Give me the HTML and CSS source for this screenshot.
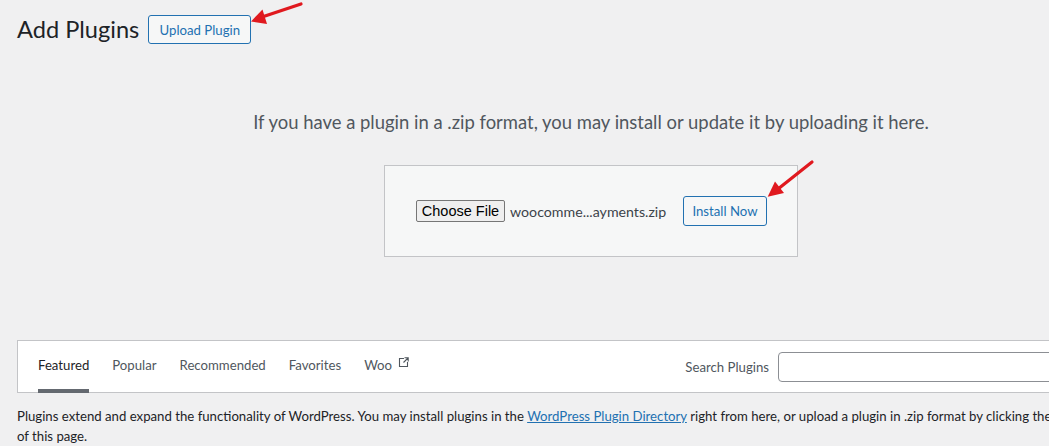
FILE: index.html
```html
<!DOCTYPE html>
<html lang="en">
<head>
<meta charset="utf-8">
<title>Add Plugins</title>
<link rel="stylesheet" href="styles.css">
</head>
<body>
<div class="wrap">
  <div class="page-head">
    <h1 class="page-title">Add Plugins</h1>
    <button class="btn-outline upload-btn" type="button">Upload Plugin</button>
  </div>

  <div class="upload-plugin">
    <p class="install-help">If you have a plugin in a .zip format, you may install or update it by uploading it here.</p>
    <form class="upload-form">
      <button class="file-btn" type="button">Choose File</button>
      <span class="file-name">woocomme...ayments.zip</span>
      <button class="btn-outline install-btn" type="button">Install Now</button>
    </form>
  </div>

  <div class="wp-filter">
    <ul class="filter-links">
      <li><a class="current">Featured</a></li>
      <li><a>Popular</a></li>
      <li><a>Recommended</a></li>
      <li><a>Favorites</a></li>
      <li><a>Woo <svg class="ext" width="11" height="11" viewBox="0 0 11 11"><path d="M6 1.5H1.5V9.5H9.5V5" fill="none" stroke="#50575e" stroke-width="1.1"/><path d="M6.5 0.8H10.2V4.5M10 1L5.5 5.5" fill="none" stroke="#50575e" stroke-width="1.1"/></svg></a></li>
    </ul>
    <div class="search-form">
      <label class="search-label">Search Plugins</label>
      <input class="search-input" type="search">
    </div>
  </div>

  <p class="desc">Plugins extend and expand the functionality of WordPress. You may install plugins in the <a class="link">WordPress Plugin Directory</a> right from here, or upload a plugin in .zip format by clicking the button at the top of this page.</p>
</div>

<svg class="arrows" width="1049" height="446" viewBox="0 0 1049 446">
  <line x1="301" y1="4" x2="262" y2="17" stroke="#e0191f" stroke-width="3.2" stroke-linecap="round"/>
  <polygon points="251,21.5 267,24 262.5,9.5" fill="#e0191f"/>
  <line x1="812" y1="162" x2="778" y2="189" stroke="#e0191f" stroke-width="3.2" stroke-linecap="round"/>
  <polygon points="767.7,196.7 784,193 775,181.5" fill="#e0191f"/>
</svg>
</body>
</html>
```

FILE: styles.css
```css
html, body {
  margin: 0;
  padding: 0;
}
body {
  background: #f0f0f1;
  font-family: Lato, "Liberation Sans", sans-serif;
  color: #3c434a;
  font-size: 13.2px;
  width: 1049px;
  height: 446px;
  overflow: hidden;
  position: relative;
}
.wrap {
  width: 1148px;
  margin-left: 17px;
}
.page-head {
  display: flex;
  align-items: center;
  gap: 9px;
  margin-top: 15px;
  height: 29px;
}
.page-title {
  margin: 0;
  font-size: 23.6px;
  font-weight: 400;
  color: #1d2327;
  line-height: 29px;
}
.btn-outline {
  font-family: inherit;
  font-size: 13.2px;
  color: #2271b1;
  border: 1px solid #2271b1;
  background: #f6f7f7;
  border-radius: 3px;
  padding: 0;
  white-space: nowrap;
  cursor: pointer;
}
.upload-btn {
  height: 29px;
  width: 103px;
}
.upload-plugin {
  text-align: center;
}
.install-help {
  margin: 66px 0 0;
  font-size: 18.45px;
  line-height: 24px;
  color: #50575e;
}
.upload-form {
  box-sizing: border-box;
  width: 414px;
  margin: 31px auto 0;
  padding: 30px 0;
  background: #f6f7f7;
  border: 1px solid #c3c4c7;
  display: flex;
  align-items: center;
  justify-content: center;
}
.file-btn {
  font-family: "Liberation Sans", Arial, sans-serif;
  font-size: 14.5px;
  color: #000;
  background: #efefef;
  border: 1px solid #767676;
  border-radius: 2px;
  height: 22px;
  width: 89px;
  padding: 0;
  margin-left: 1px;
}
.file-name {
  margin-left: 5px;
  font-size: 14.2px;
  color: #3c434a;
  width: 158px;
  text-align: left;
}
.install-btn {
  height: 30px;
  width: 84px;
  margin-left: 15px;
}
.wp-filter {
  margin-top: 83px;
  background: #fff;
  border: 1px solid #c3c4c7;
  box-sizing: border-box;
  height: 53px;
  display: flex;
  justify-content: space-between;
  align-items: flex-start;
  padding: 0 20px;
}
.filter-links {
  list-style: none;
  margin: 0;
  padding: 0;
  display: flex;
  gap: 23px;
}
.filter-links a {
  display: block;
  padding: 15px 0 15px;
  line-height: 18px;
  color: #50575e;
  border-bottom: 4px solid transparent;
  margin-bottom: -1px;
}
.filter-links a.current {
  color: #1d2327;
  border-bottom-color: #646970;
}
.ext {
  margin-left: 3px;
  vertical-align: 2px;
}
.search-form {
  display: flex;
  align-items: center;
  gap: 9px;
  margin-top: 11px;
}
.search-label {
  color: #50575e;
}
.search-input {
  box-sizing: border-box;
  width: 366px;
  height: 30px;
  border: 1px solid #8c8f94;
  border-radius: 4px;
  background: #fff;
  margin: 0;
}
.desc {
  margin: 13px 0 0;
  padding-right: 8px;
  line-height: 20px;
  color: #1d2327;
}
.link {
  color: #2271b1;
  text-decoration: underline;
}
.arrows {
  position: absolute;
  left: 0;
  top: 0;
  pointer-events: none;
}
```
